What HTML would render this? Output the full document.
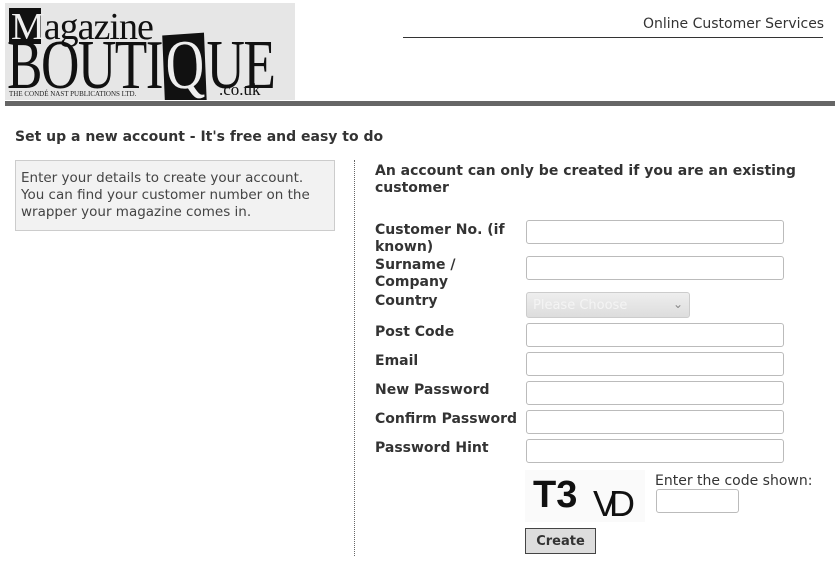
<!DOCTYPE html>
<html><head><style>
body{margin:0;width:837px;height:563px;background:#fff;font-family:"DejaVu Sans",Verdana,sans-serif;color:#333;position:relative;overflow:hidden}
.a{position:absolute}
.logo{left:5px;top:3px;width:290px;height:97px;background:#e6e6e6;overflow:hidden}
.lbl{position:absolute;left:375px;font-size:14px;font-weight:bold;color:#333;line-height:17px}
.inp{position:absolute;left:526px;width:256px;height:22px;border:1px solid #bbb;border-radius:3px;background:#fff}
</style></head><body>
<div class="a logo">
 <div class="a" style="left:4px;top:5px;width:32px;height:36px;background:#111"></div>
 <div class="a" style="left:6px;top:2px;font-family:'Liberation Serif',serif;font-size:38px;color:#111;letter-spacing:-1px"><span style="color:#eee">M</span>agazine</div>
 <div class="a" style="left:2px;top:28px;font-family:'Liberation Serif',serif;font-size:70px;color:#111;letter-spacing:-2px;line-height:70px;transform:scaleX(0.76);transform-origin:0 0;white-space:nowrap">BOUTI<span style="display:inline-block;background:#111;color:#eee;height:68px;line-height:64px;padding:0 3px;margin:0 2px;transform:rotate(-3deg)">Q</span>UE</div>
 <div class="a" style="left:4px;top:87px;font-family:'Liberation Serif',serif;font-size:7px;color:#222;white-space:nowrap;z-index:2">THE CONDÉ NAST PUBLICATIONS LTD.</div>
 <div class="a" style="left:214px;top:77px;font-family:'Liberation Serif',serif;font-size:17px;color:#111;z-index:2">.co.uk</div>
</div>
<div class="a" style="left:643px;top:16px;font-size:14px;color:#333">Online Customer Services</div>
<div class="a" style="left:403px;top:37px;width:420px;height:1px;background:#333"></div>
<div class="a" style="left:5px;top:101px;width:830px;height:5px;background:#666"></div>
<div class="a" style="left:15px;top:129px;font-size:14px;font-weight:bold;color:#333">Set up a new account - It's free and easy to do</div>
<div class="a" style="left:15px;top:160px;width:308px;height:57px;padding:9px 5px 3px;background:#f2f2f2;border:1px solid #ccc;font-size:13.5px;line-height:17px;color:#444">Enter your details to create your account. You can find your customer number on the wrapper your magazine comes in.</div>
<div class="a" style="left:354px;top:160px;width:0;height:396px;border-left:1px dotted #666"></div>
<div class="a" style="left:375px;top:163px;width:430px;font-size:14px;font-weight:bold;line-height:17px;color:#333">An account can only be created if you are an existing customer</div>
<div class="lbl" style="top:222px;width:145px">Customer No. (if known)</div>
<div class="inp" style="top:220px"></div>
<div class="lbl" style="top:257px;width:120px">Surname / Company</div>
<div class="inp" style="top:256px"></div>
<div class="lbl" style="top:293px">Country</div>
<div class="a" style="left:526px;top:292px;width:162px;height:24px;border:1px solid #ccc;border-radius:3px;background:linear-gradient(#eee,#ddd);font-size:13px;color:#f4f4f4;line-height:26px;text-indent:6px">Please Choose<span style="position:absolute;right:6px;top:-2px;color:#888;font-size:12px">&#8964;</span></div>
<div class="lbl" style="top:324px">Post Code</div>
<div class="inp" style="top:323px"></div>
<div class="lbl" style="top:353px">Email</div>
<div class="inp" style="top:352px"></div>
<div class="lbl" style="top:382px">New Password</div>
<div class="inp" style="top:381px"></div>
<div class="lbl" style="top:411px">Confirm Password</div>
<div class="inp" style="top:410px"></div>
<div class="lbl" style="top:440px">Password Hint</div>
<div class="inp" style="top:439px"></div>
<div class="a" style="left:525px;top:470px;width:120px;height:52px;background:#fafafa;overflow:hidden">
 <div class="a" style="left:8px;top:4px;font-family:'Liberation Sans',sans-serif;font-weight:bold;font-size:38px;color:#111">T3</div>
 <div class="a" style="left:68px;top:16px;font-family:'Liberation Sans',sans-serif;font-size:36px;color:#111;letter-spacing:-8px;line-height:36px">VD</div>
</div>
<div class="a" style="left:655px;top:473px;font-size:14px;color:#333">Enter the code shown:</div>
<div class="a" style="left:656px;top:489px;width:81px;height:22px;border:1px solid #bbb;border-radius:3px"></div>
<div class="a" style="left:525px;top:528px;width:69px;height:24px;border:1px solid #444;background:#ddd;font-size:13px;font-weight:bold;text-align:center;line-height:26px;color:#333">Create</div>
</body></html>
